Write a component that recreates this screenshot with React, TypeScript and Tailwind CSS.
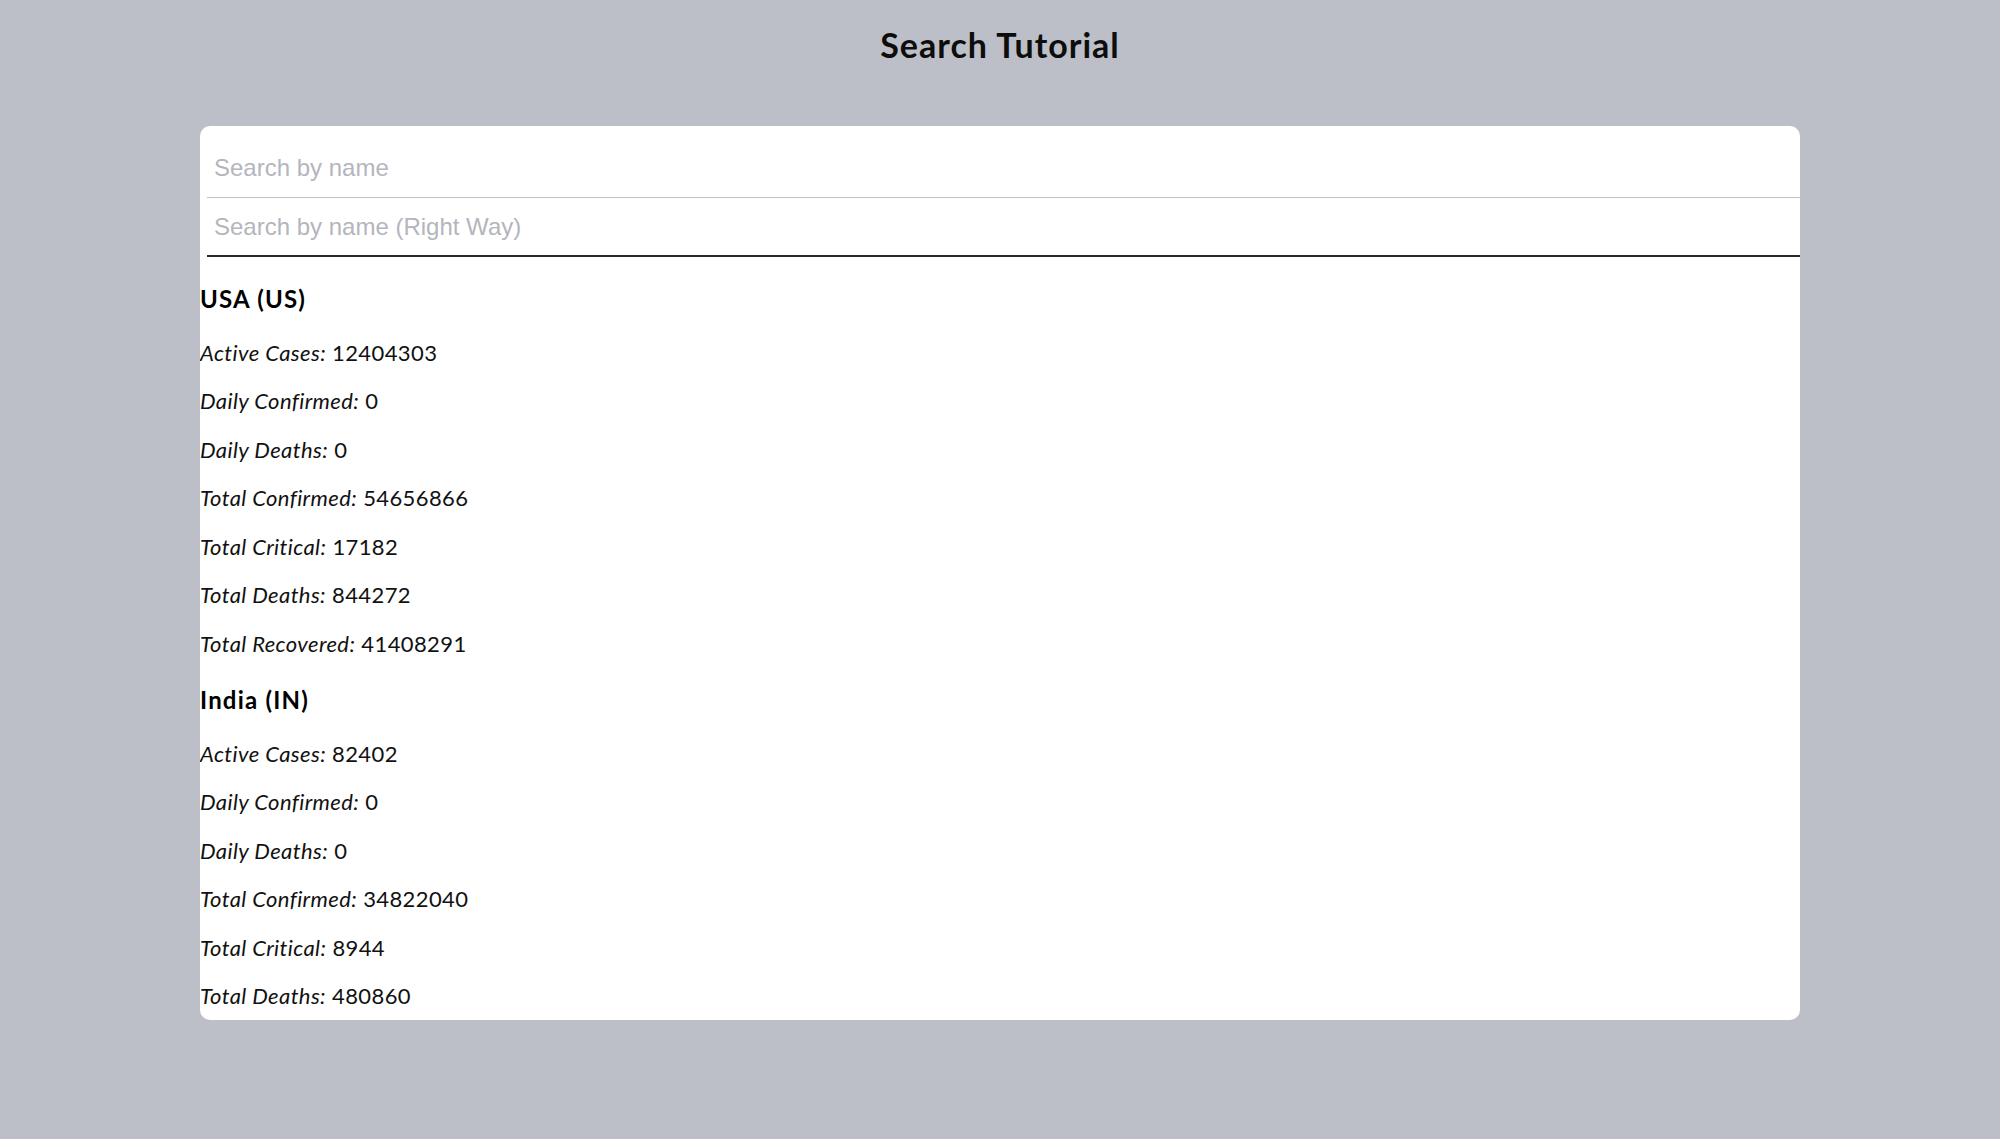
const countries = [
  {
    name: "USA",
    code: "US",
    stats: [
      ["Active Cases", "12404303"],
      ["Daily Confirmed", "0"],
      ["Daily Deaths", "0"],
      ["Total Confirmed", "54656866"],
      ["Total Critical", "17182"],
      ["Total Deaths", "844272"],
      ["Total Recovered", "41408291"],
    ],
  },
  {
    name: "India",
    code: "IN",
    stats: [
      ["Active Cases", "82402"],
      ["Daily Confirmed", "0"],
      ["Daily Deaths", "0"],
      ["Total Confirmed", "34822040"],
      ["Total Critical", "8944"],
      ["Total Deaths", "480860"],
    ],
  },
];

export default function App() {
  return (
    <div className="min-h-[1139px] w-full bg-[#bcbfc7] font-['Lato',sans-serif] text-black">
      {/* Header */}
      <h1 className="pt-[25px] text-center text-[34px] font-bold leading-[40px] tracking-[1px] text-[#0d0d0d]">
        Search Tutorial
      </h1>

      {/* Card */}
      <div className="mx-[200px] mt-[61px] h-[894px] overflow-hidden rounded-[10px] bg-white pt-[13px]">
        <div className="ml-[7px] flex flex-col font-['Liberation_Sans',Arial,sans-serif]">
          <input
            type="text"
            placeholder="Search by name"
            className="h-[59px] w-full border-b border-[#bfc0c6] bg-transparent px-[7px] text-[24px] outline-none placeholder:text-[#b4b5bd]"
          />
          <input
            type="text"
            placeholder="Search by name (Right Way)"
            className="h-[59px] w-full border-b-2 border-[#2a2a2a] bg-transparent px-[7px] text-[24px] outline-none placeholder:text-[#b4b5bd]"
          />
        </div>

        {/* Results */}
        <div className="pt-[10px]">
          {countries.map((country) => (
            <div key={country.code}>
              <h3 className="mt-[16px] mb-[13.5px] text-[24px] font-bold leading-[32px] tracking-[1.2px]">
                {country.name} ({country.code})
              </h3>
              {country.stats.map(([label, value]) => (
                <p key={label} className="text-[22px] leading-[48.5px] tracking-[0.4px] text-[#111]">
                  <i>{label}:</i> {value}
                </p>
              ))}
            </div>
          ))}
        </div>
      </div>
    </div>
  );
}
